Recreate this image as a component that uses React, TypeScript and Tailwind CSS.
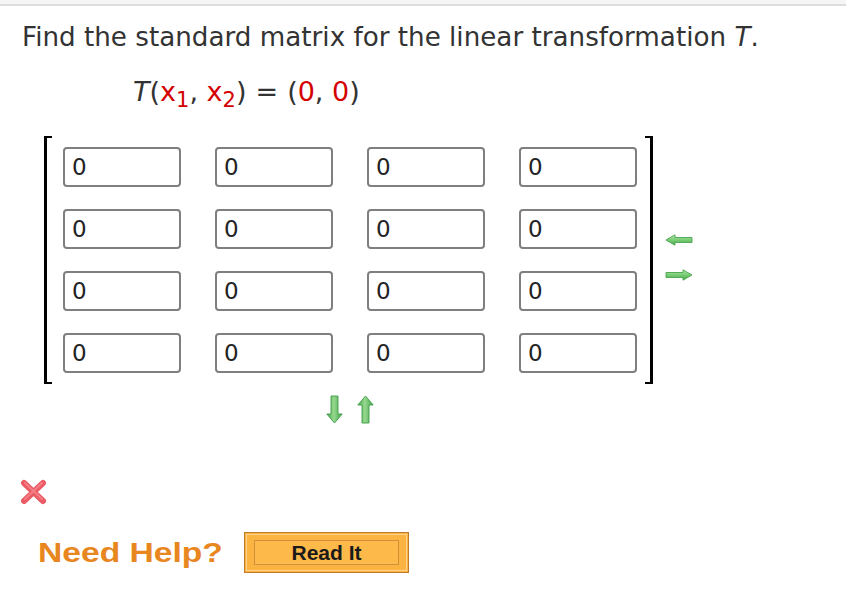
import React from "react";

function HArrow({ dir }: { dir: "left" | "right" }) {
  const pts = "1,6 10,0.8 10,3.5 27,3.5 27,8.5 10,8.5 10,11.2";
  return (
    <svg width="28" height="12" viewBox="0 0 28 12" style={{ transform: dir === "right" ? "scaleX(-1)" : undefined }}>
      <defs>
        <linearGradient id={`hg-${dir}`} x1="0" y1="0" x2="0" y2="1">
          <stop offset="0" stopColor="#b4e6ac" />
          <stop offset="0.5" stopColor="#78cc74" />
          <stop offset="1" stopColor="#4aa84f" />
        </linearGradient>
      </defs>
      <polygon points={pts} fill={`url(#hg-${dir})`} stroke="#4aa550" strokeWidth="0.9" strokeLinejoin="round" />
    </svg>
  );
}

function VArrow({ dir }: { dir: "up" | "down" }) {
  const pts = "8.5,28 0.8,19 5,19 5,1 12,1 12,19 16.2,19";
  return (
    <svg width="17" height="29" viewBox="0 0 17 29" style={{ transform: dir === "up" ? "scaleY(-1)" : undefined }}>
      <defs>
        <linearGradient id={`vg-${dir}`} x1="0" y1="0" x2="1" y2="0">
          <stop offset="0" stopColor="#45a44b" />
          <stop offset="0.45" stopColor="#96d88e" />
          <stop offset="1" stopColor="#45a44b" />
        </linearGradient>
      </defs>
      <polygon points={pts} fill={`url(#vg-${dir})`} stroke="#3f9c47" strokeWidth="0.9" strokeLinejoin="round" />
    </svg>
  );
}

function RedX() {
  return (
    <svg width="27" height="26" viewBox="0 0 27 26">
      <g stroke="#ec5a64" strokeWidth="6" strokeLinecap="round">
        <line x1="4" y1="4" x2="23" y2="22" />
        <line x1="23" y1="4" x2="4" y2="22" />
      </g>
      <g stroke="#f9979d" strokeWidth="2" strokeLinecap="round" opacity="0.6">
        <line x1="5" y1="4" x2="22" y2="20" />
        <line x1="22" y1="4" x2="5" y2="20" />
      </g>
    </svg>
  );
}

function Cell() {
  return (
    <div className="w-[118px] h-[40px] border-2 border-[#7f7f7f] rounded-[4px] bg-white flex items-center pl-[7px] text-[23px] text-[#222] font-['DejaVu_Sans',sans-serif]">
      0
    </div>
  );
}

export default function App() {
  const rows = [0, 1, 2, 3];
  const cols = [0, 1, 2, 3];
  return (
    <div className="w-[846px] h-[602px] bg-white overflow-hidden font-['DejaVu_Sans',sans-serif] text-[#333]">
      <div className="h-[4px] bg-[#f5f5f5]" />
      <div className="h-[2px] bg-[#dddddd]" />
      <div className="pl-[22px] pt-[16px]">
        <p className="text-[26.2px] leading-[30px] text-[#333] whitespace-nowrap">
          Find the standard matrix for the linear transformation <i>T</i>.
        </p>
        <div className="mt-[25px] ml-[111px] h-[30px] text-[27px] leading-[30px] text-[#333] whitespace-nowrap">
          <i>T</i>(<span className="text-[#d40000]">x<span className="relative top-[6px] text-[21px]">1</span></span>,{" "}
          <span className="text-[#d40000]">x<span className="relative top-[6px] text-[21px]">2</span></span>)
          <span className="mx-[9px]">=</span>(
          <span className="text-[#d40000]">0</span>, <span className="text-[#d40000]">0</span>)
        </div>

        <div className="mt-[29px] ml-[22px] flex items-center">
          <div className="w-[8px] h-[248px] border-l-[3px] border-y-2 border-black" />
          <div className="ml-[11px] grid grid-cols-[repeat(4,118px)] gap-x-[34px] gap-y-[22px]">
            {rows.map((r) => cols.map((c) => <Cell key={`${r}-${c}`} />))}
          </div>
          <div className="ml-[8px] w-[8px] h-[248px] border-r-[3px] border-y-2 border-black" />
          <div className="ml-[12px] flex flex-col gap-[23px] mt-[-6px]">
            <HArrow dir="left" />
            <HArrow dir="right" />
          </div>
        </div>

        <div className="mt-[11px] ml-[304px] flex gap-[14px]">
          <VArrow dir="down" />
          <VArrow dir="up" />
        </div>

        <div className="mt-[55px] ml-[-2px]">
          <RedX />
        </div>

        <div className="mt-[27px] flex items-center">
          <span className="ml-[16px] inline-block origin-left scale-x-[1.2] text-[28px] leading-[41px] font-bold text-[#e8861f] font-['Liberation_Sans',sans-serif] whitespace-nowrap">
            Need Help?
          </span>
          <div className="ml-[52px] w-[165px] h-[41px] bg-[#fbb442] border border-[#c27a2a] p-[1px]">
            <div className="w-full h-full border border-[#fdd28a] flex items-center justify-center px-[7px] py-[5px]">
              <div className="w-full h-full border border-[#d0913a] bg-[#fdb94a] flex items-center justify-center text-[21px] font-bold text-[#1a1a1a] font-['Liberation_Sans',sans-serif]">
                Read It
              </div>
            </div>
          </div>
        </div>
      </div>
    </div>
  );
}
